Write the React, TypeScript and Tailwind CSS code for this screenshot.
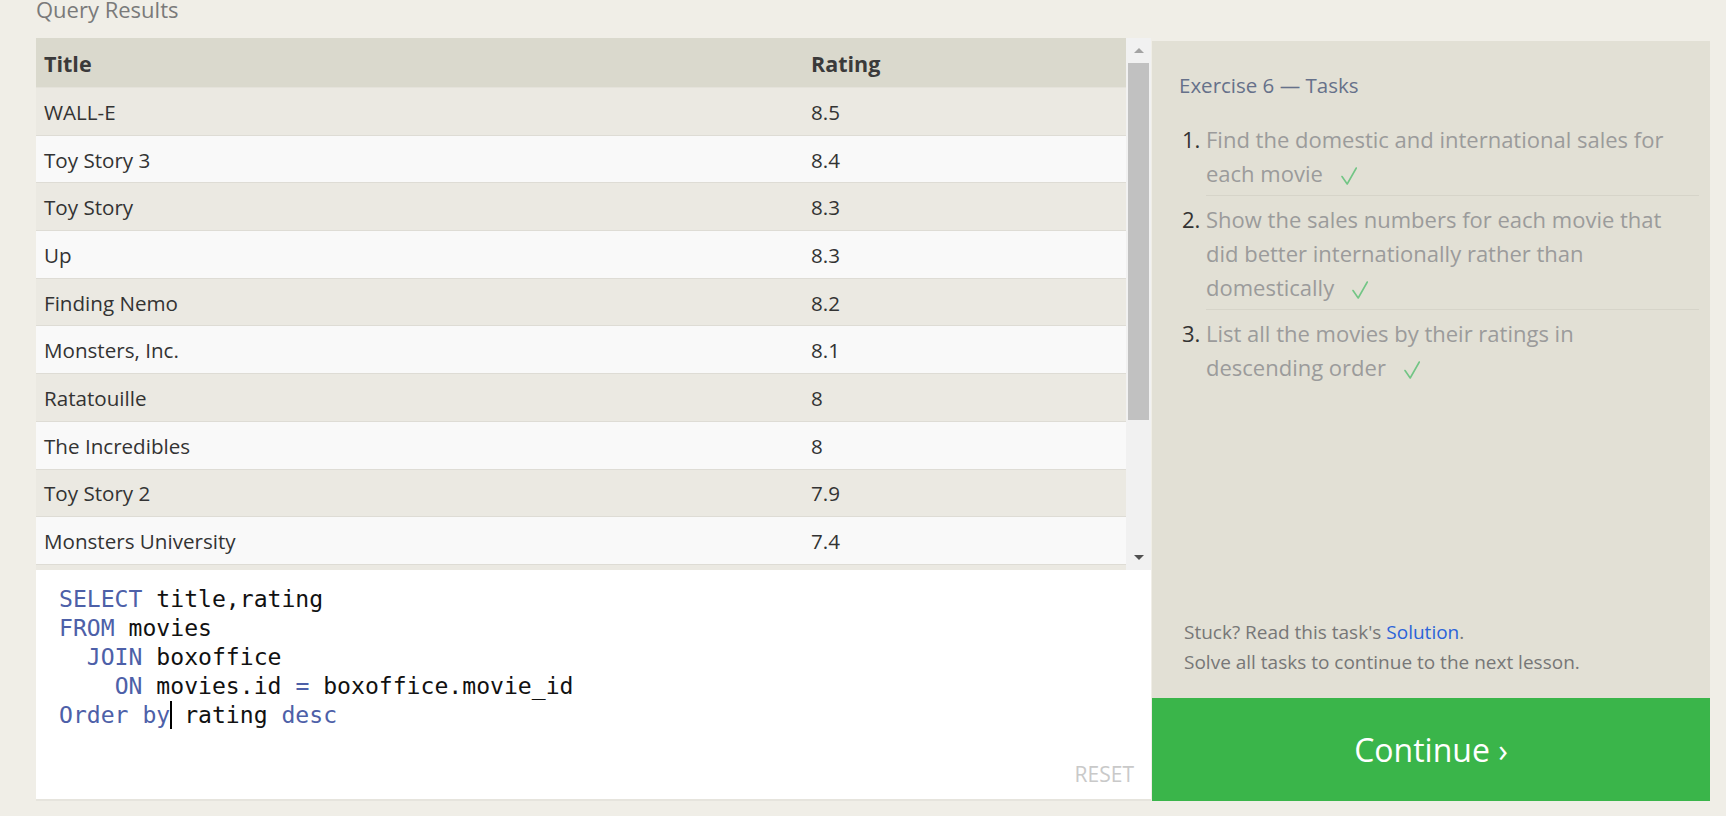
import React from "react";

const rows: [string, string][] = [
  ["WALL-E", "8.5"],
  ["Toy Story 3", "8.4"],
  ["Toy Story", "8.3"],
  ["Up", "8.3"],
  ["Finding Nemo", "8.2"],
  ["Monsters, Inc.", "8.1"],
  ["Ratatouille", "8"],
  ["The Incredibles", "8"],
  ["Toy Story 2", "7.9"],
  ["Monsters University", "7.4"],
];

function Check() {
  return (
    <svg
      className="ml-[18px] inline-block w-[16px] h-[18px]"
      viewBox="0 0 16 18"
      fill="none"
      stroke="#72c585"
      strokeWidth="1.6"
      strokeLinecap="round"
      strokeLinejoin="round"
    >
      <path d="M1 9.5 L6.2 17 L15.3 1" />
    </svg>
  );
}

function Kw({ children }: { children: React.ReactNode }) {
  return <span className="text-[#4d60a8]">{children}</span>;
}

export default function App() {
  return (
    <div className="min-h-screen bg-[#f0eee7] font-['Open_Sans',sans-serif] pl-[36px]">
      <h1 className="text-[22px] leading-[19px] text-[#7a7a7a] mb-[19px]">Query Results</h1>

      <div className="flex gap-[1px]">
        {/* left column: results + editor */}
        <div className="w-[1115px] flex flex-col">
          <div className="flex h-[532px]">
            <div className="flex-1 overflow-hidden bg-[#ebe9e2]">
              <div className="grid grid-cols-[767px_1fr] h-[50px] items-center pt-[3px] bg-[#dad9cd] border-b border-[#e4e2da] text-[21.5px] font-bold text-[#3a3a3a]">
                <div className="px-[8px]">Title</div>
                <div className="px-[8px]">Rating</div>
              </div>
              {rows.map(([title, rating], i) => (
                <div
                  key={title}
                  className={
                    "grid grid-cols-[767px_1fr] h-[47.7px] items-center pt-[2px] border-b border-[#dedcd5] text-[20.6px] text-[#333] " +
                    (i % 2 === 0 ? "bg-[#ebe9e2]" : "bg-[#f9f9f9]")
                  }
                >
                  <div className="px-[8px]">{title}</div>
                  <div className="px-[8px]">{rating}</div>
                </div>
              ))}
            </div>
            {/* scrollbar */}
            <div className="w-[25px] flex flex-col bg-[#f1f1f1]">
              <div className="h-[25px] flex items-center justify-center">
                <div className="w-0 h-0 border-l-[5.5px] border-r-[5.5px] border-b-[5px] border-l-transparent border-r-transparent border-b-[#a3a3a3]" />
              </div>
              <div className="flex-1 px-[2px]">
                <div className="h-[357px] bg-[#c1c1c1]" />
              </div>
              <div className="h-[25px] flex items-center justify-center">
                <div className="w-0 h-0 border-l-[5.5px] border-r-[5.5px] border-t-[5px] border-l-transparent border-r-transparent border-t-[#505050]" />
              </div>
            </div>
          </div>

          <div className="h-[231px] flex flex-col bg-white border-b-2 border-[#e6e4dd]">
            <pre className="pl-[23px] pt-[15px] font-['DejaVu_Sans_Mono',monospace] text-[23.1px] leading-[29px] text-[#111]">
              <Kw>SELECT</Kw> title,rating{"\n"}
              <Kw>FROM</Kw> movies{"\n"}
              {"  "}<Kw>JOIN</Kw> boxoffice{"\n"}
              {"    "}<Kw>ON</Kw> movies.id <Kw>=</Kw> boxoffice.movie_id{"\n"}
              <Kw>Order by</Kw>
              <span className="inline-block w-[2px] -mr-[2px] h-[28px] bg-black align-[-6px]" /> rating <Kw>desc</Kw>
            </pre>
            <div className="mt-auto self-end pr-[17px] pb-[15px] text-[21px] leading-[20px] text-[#c9c9c9]">
              RESET
            </div>
          </div>
        </div>

        {/* right panel */}
        <div className="mt-[3px] w-[558px] flex flex-col bg-[#e2e0d5]">
          <div className="flex-1 flex flex-col pl-[27px] pr-[11px] pt-[30px]">
            <h2 className="text-[20.5px] leading-[28px] text-[#66718a]">Exercise 6 — Tasks</h2>
            <ol className="mt-[17px] list-decimal pl-[27px] text-[22px] leading-[34px] text-[#9b9b9b] marker:text-[#333]">
              <li className="pr-[10px] pt-[6px] pb-[5px] border-b border-[#d6d4c9]">
                Find the domestic and international sales for each movie
                <Check />
              </li>
              <li className="pr-[10px] pt-[6px] pb-[5px] border-b border-[#d6d4c9]">
                Show the sales numbers for each movie that did better internationally rather than domestically
                <Check />
              </li>
              <li className="pr-[10px] pt-[6px]">
                List all the movies by their ratings in descending order
                <Check />
              </li>
            </ol>
            <div className="mt-auto pl-[5px] pb-[21px] text-[19px] leading-[30px] text-[#777]">
              <p>
                Stuck? Read this task's <span className="text-[#2b63d9]">Solution</span>.
              </p>
              <p>Solve all tasks to continue to the next lesson.</p>
            </div>
          </div>
          <button className="h-[103px] bg-[#3ab54a] text-white text-[32px]">Continue ›</button>
        </div>
      </div>
    </div>
  );
}
